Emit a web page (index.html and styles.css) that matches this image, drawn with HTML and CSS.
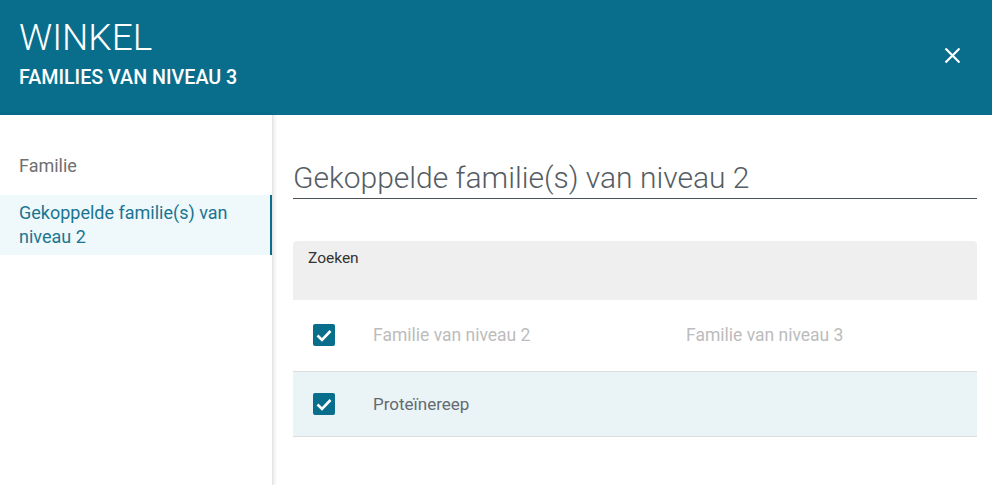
FILE: index.html
```html
<!DOCTYPE html>
<html>
  <head>
    <title>Winkel - Families van niveau 3</title>
    <link rel="stylesheet" href="styles.css">
  </head>
  <body>
    <div id="topbar">
      <div class="titles">
        <h1>WINKEL</h1>
        <div class="subtitle">FAMILIES VAN NIVEAU 3</div>
      </div>
      <button class="close" aria-label="Sluiten">
        <svg width="17" height="17" viewBox="0 0 17 17">
          <path d="M1.5 1.5 L15.5 15.5 M15.5 1.5 L1.5 15.5" stroke="#fff" stroke-width="2.2" fill="none"/>
        </svg>
      </button>
    </div>

    <div id="page">
      <ul class="menu">
        <li>Familie</li>
        <li class="active">Gekoppelde familie(s) van niveau 2</li>
      </ul>

      <div class="content">
        <h2>Gekoppelde familie(s) van niveau 2</h2>

        <div class="search">
          <label>Zoeken</label>
        </div>

        <table class="grid">
          <tr class="head">
            <td class="check"><span class="box"></span></td>
            <td class="col1">Familie van niveau 2</td>
            <td>Familie van niveau 3</td>
          </tr>
          <tr class="row">
            <td class="check"><span class="box"></span></td>
            <td class="col1">Proteïnereep</td>
            <td></td>
          </tr>
        </table>
      </div>
    </div>
  </body>
</html>
```

FILE: styles.css
```css
body {
  margin: 0;
  font-family: Roboto, "Liberation Sans", sans-serif;
  background: #fff;
  color: #555;
}

#topbar {
  height: 115px;
  background: #086e8c;
  color: #fff;
  display: flex;
  align-items: flex-start;
  justify-content: space-between;
  box-sizing: border-box;
  padding: 16px 31px 0 19px;
}

#topbar h1 {
  margin: 0;
  font-size: 37px;
  font-weight: 300;
  line-height: 44px;
}

.subtitle {
  margin-top: 6px;
  font-size: 19.7px;
  font-weight: 500;
  line-height: 24px;
}

.close {
  margin-top: 31px;
  background: none;
  border: 0;
  padding: 0;
  width: 17px;
  height: 17px;
  cursor: pointer;
}

.close svg {
  display: block;
}

#page {
  display: flex;
  height: 370px;
}

.menu {
  list-style: none;
  margin: 0;
  padding: 33px 0 0 0;
  width: 272px;
  flex-shrink: 0;
  box-shadow: 1px 0 4px rgba(0, 0, 0, 0.12);
  border-right: 1px solid #e4e4e4;
}

.menu li {
  font-size: 18px;
  line-height: 24px;
  padding: 6px 20px 6px 19px;
  color: #707070;
  margin-bottom: 11px;
}

.menu li.active {
  background: #eff8fa;
  color: #1a7592;
  border-right: 2px solid #0a6d8b;
}

.content {
  flex: 1;
  padding: 43px 15px 0 20px;
}

.content h2 {
  margin: 0;
  font-size: 30px;
  font-weight: 300;
  color: #555d63;
  line-height: 40px;
  border-bottom: 1px solid #4b5258;
}

.search {
  margin-top: 42px;
  height: 59px;
  background: #efefef;
  border-radius: 4px 4px 0 0;
  padding: 7px 15px;
  box-sizing: border-box;
}

.search label {
  font-size: 15.5px;
  color: #333;
}

.grid {
  width: 100%;
  border-collapse: collapse;
}

.grid td {
  padding: 0;
}

.grid .check {
  width: 80px;
  padding-left: 20px;
  box-sizing: border-box;
}

.grid .col1 {
  width: 313px;
}

.head {
  height: 71px;
  color: #bcbcbc;
  font-size: 17.5px;
  border-bottom: 1px solid #ddd;
}

.row {
  height: 65px;
  background: #eaf3f5;
  color: #646b70;
  font-size: 17px;
  border-bottom: 1px solid #ddd;
}

.box {
  display: block;
  width: 22px;
  height: 22px;
  border-radius: 2px;
  background: #086e8c url("data:image/svg+xml;utf8,<svg xmlns='http://www.w3.org/2000/svg' viewBox='0 0 22 22'><path d='M4.5 11.5 L9 16 L17.5 7' stroke='white' stroke-width='2.6' fill='none'/></svg>") center no-repeat;
}
```
